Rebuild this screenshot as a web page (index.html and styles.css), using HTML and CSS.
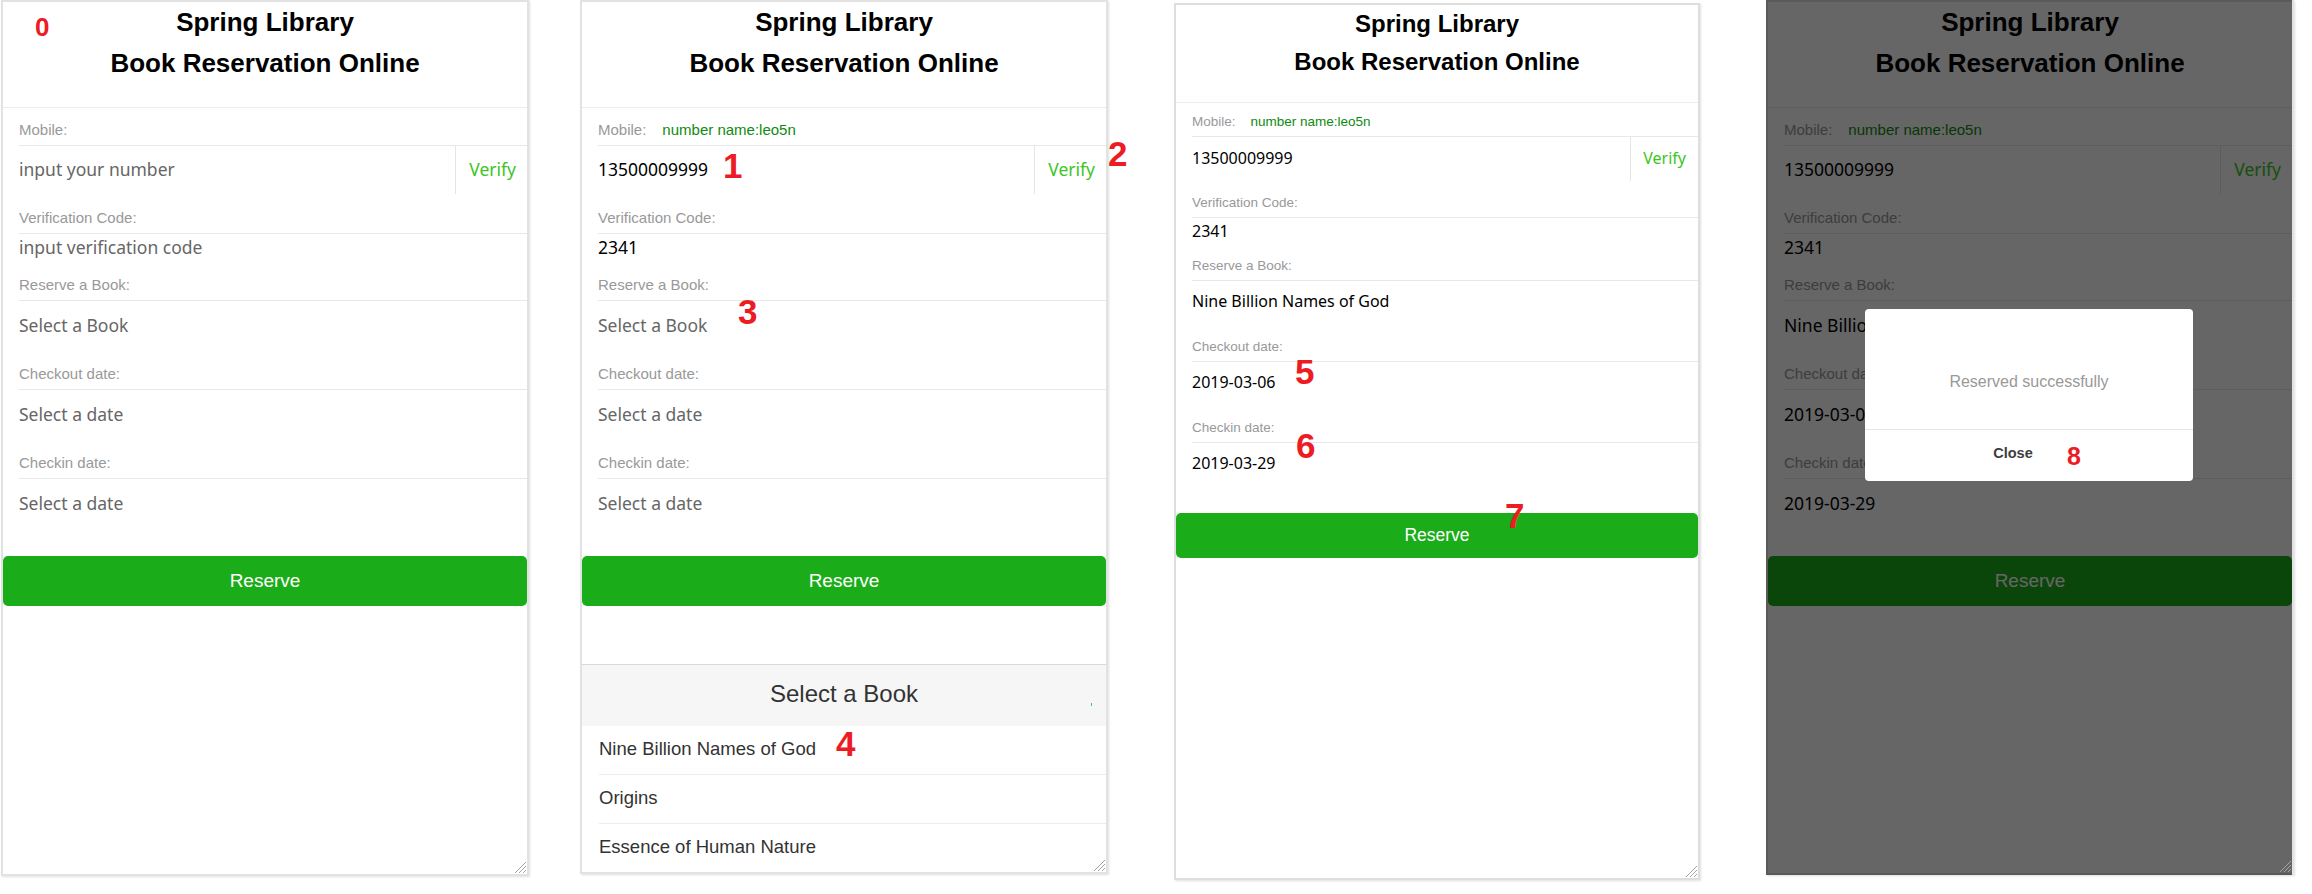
FILE: index.html
```html
<!DOCTYPE html>
<html lang="en">
<head>
<meta charset="utf-8">
<title>Spring Library - Book Reservation Online</title>
<link rel="stylesheet" href="styles.css">
</head>
<body>
<main class="board">

  <!-- Step 0: empty form -->
  <section class="shot shot-1">
    <div class="frame">
      <header class="hdr"><h1>Spring Library</h1><h2>Book Reservation Online</h2></header>
      <div class="label label-first">Mobile:</div>
      <div class="row-input">
        <span class="field ph">input your number</span>
        <span class="vcode">Verify</span>
      </div>
      <div class="label">Verification Code:</div>
      <div class="row-plain ph">input verification code</div>
      <div class="label">Reserve a Book:</div>
      <div class="row-select ph">Select a Book</div>
      <div class="label">Checkout date:</div>
      <div class="row-select ph">Select a date</div>
      <div class="label">Checkin date:</div>
      <div class="row-select ph">Select a date</div>
      <button class="btn" type="button">Reserve</button>
    </div>
    <svg class="grip" viewBox="0 0 12 12" width="12" height="12"><path d="M12 1L1 12M12 5L5 12M12 9L9 12" stroke="#a3a3a3" stroke-width="1"/></svg>
    <span class="mark mark-sm mark-0">0</span>
  </section>

  <!-- Step 1-4: number entered, book picker open -->
  <section class="shot shot-2">
    <div class="frame">
      <header class="hdr"><h1>Spring Library</h1><h2>Book Reservation Online</h2></header>
      <div class="label label-first">Mobile:<span class="hint">number name:leo5n</span></div>
      <div class="row-input">
        <span class="field val">13500009999</span>
        <span class="vcode">Verify</span>
      </div>
      <div class="label">Verification Code:</div>
      <div class="row-plain val">2341</div>
      <div class="label">Reserve a Book:</div>
      <div class="row-select ph">Select a Book</div>
      <div class="label">Checkout date:</div>
      <div class="row-select ph">Select a date</div>
      <div class="label">Checkin date:</div>
      <div class="row-select ph">Select a date</div>
      <button class="btn" type="button">Reserve</button>

      <div class="picker">
        <div class="picker-hd">Select a Book<span class="picker-dot"></span></div>
        <div class="opt">Nine Billion Names of God</div>
        <div class="opt">Origins</div>
        <div class="opt">Essence of Human Nature</div>
      </div>
    </div>
    <svg class="grip" viewBox="0 0 12 12" width="12" height="12"><path d="M12 1L1 12M12 5L5 12M12 9L9 12" stroke="#a3a3a3" stroke-width="1"/></svg>
    <span class="mark mark-1">1</span>
    <span class="mark mark-2">2</span>
    <span class="mark mark-3">3</span>
    <span class="mark mark-4">4</span>
  </section>

  <!-- Step 5-7: filled form -->
  <section class="shot shot-3">
    <div class="frame compact">
      <header class="hdr"><h1>Spring Library</h1><h2>Book Reservation Online</h2></header>
      <div class="label label-first">Mobile:<span class="hint">number name:leo5n</span></div>
      <div class="row-input">
        <span class="field val">13500009999</span>
        <span class="vcode">Verify</span>
      </div>
      <div class="label">Verification Code:</div>
      <div class="row-plain val">2341</div>
      <div class="label">Reserve a Book:</div>
      <div class="row-select val">Nine Billion Names of God</div>
      <div class="label">Checkout date:</div>
      <div class="row-select val">2019-03-06</div>
      <div class="label">Checkin date:</div>
      <div class="row-select val">2019-03-29</div>
      <button class="btn" type="button">Reserve</button>
    </div>
    <svg class="grip" viewBox="0 0 12 12" width="12" height="12"><path d="M12 1L1 12M12 5L5 12M12 9L9 12" stroke="#a3a3a3" stroke-width="1"/></svg>
    <span class="mark mark-5">5</span>
    <span class="mark mark-6">6</span>
    <span class="mark mark-7">7</span>
  </section>

  <!-- Step 8: success dialog -->
  <section class="shot shot-4">
    <div class="frame">
      <header class="hdr"><h1>Spring Library</h1><h2>Book Reservation Online</h2></header>
      <div class="label label-first">Mobile:<span class="hint">number name:leo5n</span></div>
      <div class="row-input">
        <span class="field val">13500009999</span>
        <span class="vcode">Verify</span>
      </div>
      <div class="label">Verification Code:</div>
      <div class="row-plain val">2341</div>
      <div class="label">Reserve a Book:</div>
      <div class="row-select val">Nine Billion Names of God</div>
      <div class="label">Checkout date:</div>
      <div class="row-select val">2019-03-06</div>
      <div class="label">Checkin date:</div>
      <div class="row-select val">2019-03-29</div>
      <button class="btn" type="button">Reserve</button>
    </div>
    <div class="mask">
      <div class="dialog">
        <div class="dialog-bd">Reserved successfully</div>
        <div class="dialog-ft">Close</div>
      </div>
    </div>
    <svg class="grip grip-top" viewBox="0 0 12 12" width="12" height="12"><path d="M12 1L1 12M12 5L5 12M12 9L9 12" stroke="#a3a3a3" stroke-width="1"/></svg>
    <span class="mark mark-sm mark-8">8</span>
  </section>

</main>
</body>
</html>
```

FILE: styles.css
```css
* {
  box-sizing: border-box;
  margin: 0;
  padding: 0;
}

html, body {
  background: #fff;
}

body {
  font-family: "Liberation Sans", Arial, sans-serif;
  width: 2312px;
  height: 894px;
  overflow: hidden;
}

.board {
  display: flex;
  align-items: flex-start;
  padding-left: 1px;
}

.shot {
  position: relative;
  flex: none;
}

.shot-2 { margin-left: 51px; }
.shot-3 { margin-left: 66px; margin-top: 3px; }
.shot-4 { margin-left: 66px; }

/* ---------- frame (resizable preview box) ---------- */
.frame {
  --title: 26px;
  --title-lh: 41px;
  --hdr-pt: 0px;
  --hdr-pb: 23px;
  --lab: 15px;
  --lab-lh: 20px;
  --lab-pt: 14px;
  --lab-pt1: 12px;
  --lab-pb: 5px;
  --in: 17.5px;
  --in-lh: 25.7px;
  --row-h: 48px;
  --plain-lh: 27px;
  --sel-pt: 11.65px;
  --sel-pb: 11.65px;
  --vc-pl: 13px;
  --vc-pr: 11px;
  --btn-h: 50px;
  --btn-mt: 28px;
  --btn-f: 19px;
  --hint-gap: 16px;

  position: relative;
  display: flex;
  flex-direction: column;
  width: 528px;
  height: 876px;
  overflow: hidden;
  background: #fff;
  border: 2px solid #e2e2e2;
  box-shadow: 1px 1px 2px rgba(0, 0, 0, 0.12);
}

.shot-2 .frame { height: 874px; }
.shot-4 .frame { height: 875px; }

.frame.compact {
  --title: 24px;
  --title-lh: 38px;
  --hdr-pt: 0px;
  --hdr-pb: 21px;
  --lab: 13.5px;
  --lab-lh: 18px;
  --lab-pt: 13px;
  --lab-pt1: 10px;
  --lab-pb: 5px;
  --in: 16px;
  --in-lh: 23.5px;
  --row-h: 44px;
  --plain-lh: 26px;
  --sel-pt: 8.5px;
  --sel-pb: 12px;
  --vc-pl: 12px;
  --vc-pr: 12px;
  --btn-h: 45px;
  --btn-mt: 26px;
  --btn-f: 17.5px;
  --hint-gap: 15px;

  width: 526px;
  height: 877px;
  border-color: #dedede;
}

/* ---------- header ---------- */
.hdr {
  flex: none;
  text-align: center;
  padding: var(--hdr-pt) 0 var(--hdr-pb);
  border-bottom: 1px solid #ececec;
}

.hdr h1,
.hdr h2 {
  font-size: var(--title);
  line-height: var(--title-lh);
  font-weight: bold;
  color: #000;
}

/* ---------- form ---------- */
.label {
  flex: none;
  display: flex;
  gap: var(--hint-gap);
  margin-left: 16px;
  padding: var(--lab-pt) 0 var(--lab-pb);
  font-size: var(--lab);
  line-height: var(--lab-lh);
  color: #999;
  border-bottom: 1px solid #e8e8e8;
}

.label-first {
  padding-top: var(--lab-pt1);
}

.hint {
  color: #0f8a0f;
}

.ph { color: #666; }
.val { color: #000; }

.row-input {
  flex: none;
  display: flex;
  height: var(--row-h);
  font-family: "Noto Sans", "Open Sans", sans-serif;
  font-size: var(--in);
  line-height: var(--in-lh);
}

.field {
  flex: 1;
  display: flex;
  align-items: center;
  padding-left: 16px;
}

.vcode {
  display: flex;
  align-items: center;
  padding: 0 var(--vc-pr) 0 var(--vc-pl);
  border-left: 1px solid #e5e5e5;
  color: #3cc51f;
}

.row-plain {
  flex: none;
  padding-left: 16px;
  font-family: "Noto Sans", "Open Sans", sans-serif;
  font-size: var(--in);
  line-height: var(--plain-lh);
}

.row-select {
  flex: none;
  padding: var(--sel-pt) 0 var(--sel-pb) 16px;
  font-family: "Noto Sans", "Open Sans", sans-serif;
  font-size: var(--in);
  line-height: var(--in-lh);
}

.btn {
  flex: none;
  display: block;
  width: 100%;
  height: var(--btn-h);
  margin-top: var(--btn-mt);
  border: 0;
  border-radius: 5px;
  background: #1aad19;
  color: #fff;
  font-family: "Liberation Sans", Arial, sans-serif;
  font-size: var(--btn-f);
  line-height: var(--btn-h);
  text-align: center;
}

/* ---------- book picker (bottom sheet) ---------- */
.picker {
  position: absolute;
  left: 0;
  right: 0;
  bottom: -1px;
  background: #fff;
  border-top: 1px solid #d9d9d9;
}

.picker-hd {
  position: relative;
  height: 61px;
  padding-bottom: 4px;
  line-height: 57px;
  text-align: center;
  background: #f6f6f6;
  color: #333;
  font-size: 24px;
}

.picker-dot {
  position: absolute;
  right: 14px;
  top: 38px;
  width: 1px;
  height: 3px;
  background: #3fb8b0;
}

.opt {
  height: 49px;
  margin-left: 17px;
  padding-bottom: 2px;
  line-height: 46px;
  font-size: 18.5px;
  color: #333;
  border-bottom: 1px solid #ececec;
}

/* ---------- dialog ---------- */
.mask {
  position: absolute;
  top: 0;
  left: 0;
  bottom: 0;
  right: 2px;
  display: flex;
  justify-content: center;
  align-items: flex-start;
  padding-top: 309px;
  background: rgba(0, 0, 0, 0.6);
}

.dialog {
  width: 328px;
  background: #fff;
  border-radius: 4px;
  overflow: hidden;
}

.dialog-bd {
  height: 121px;
  padding-top: 63px;
  text-align: center;
  font-size: 16px;
  line-height: 20px;
  color: #999;
  border-bottom: 1px solid #e5e5e5;
}

.dialog-ft {
  height: 51px;
  padding-right: 32px;
  line-height: 47px;
  text-align: center;
  font-size: 14.5px;
  font-weight: bold;
  color: #3d3d3d;
}

/* ---------- resize grip ---------- */
.grip {
  position: absolute;
  right: 3px;
  bottom: 3px;
}

.grip-top {
  z-index: 2;
}

/* ---------- red step annotations ---------- */
.mark {
  position: absolute;
  z-index: 3;
  font-family: "Liberation Sans", Arial, sans-serif;
  font-weight: bold;
  font-size: 35px;
  line-height: 1;
  color: #ed1c24;
}

.mark-sm {
  font-size: 26px;
}

.mark-0 { left: 34px;  top: 14px; }
.mark-1 { left: 143px; top: 148px; }
.mark-2 { left: 528px; top: 136px; }
.mark-3 { left: 158px; top: 294px; }
.mark-4 { left: 256px; top: 726px; }
.mark-5 { left: 121px; top: 351px; }
.mark-6 { left: 122px; top: 425px; }
.mark-7 { left: 331px; top: 495px; }
.mark-8 { left: 301px; top: 444px; font-size: 25px; }
```
